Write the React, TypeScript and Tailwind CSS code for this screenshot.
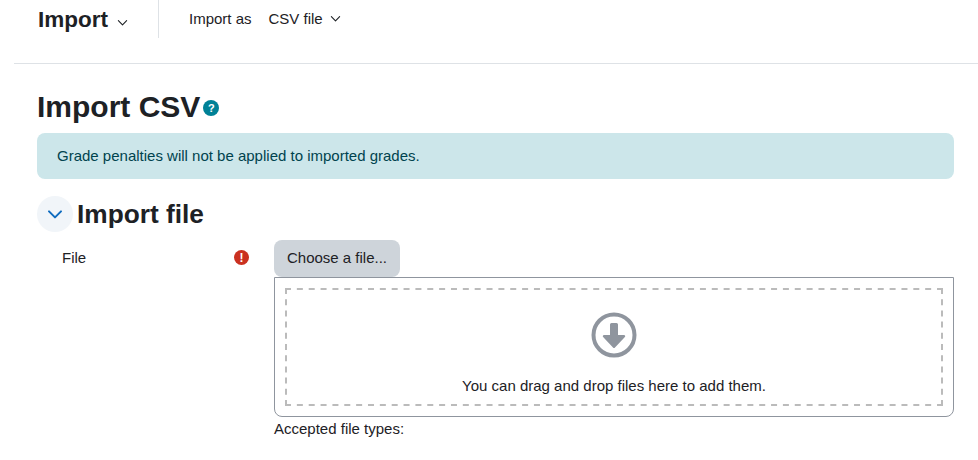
import React from "react";

const Chev = ({ className, color = "#1d2125", w = 1.2 }: { className: string; color?: string; w?: number }) => (
  <svg className={className} viewBox="0 0 12 12" fill="none">
    <path d="M1.5 4l4.500 4.500L10.500 4" stroke={color} strokeWidth={w} strokeLinecap="round" strokeLinejoin="round" />
  </svg>
);

export default function App() {
  return (
    <div className="h-[460px] w-[978px] overflow-hidden bg-white font-['Liberation_Sans',sans-serif] text-[15px] text-[#1d2125]">
      <div className="ml-[14px] flex h-[64px] items-start border-b border-[#dee2e6] pl-[24px]">
        <div className="flex h-[38px] w-[121px] items-start border-r border-[#dee2e6]">
          <span className="text-[22.5px] font-bold leading-[40px]">Import</span>
          <Chev className="ml-[9px] mt-[17px] h-[11px] w-[11px]" />
        </div>
        <span className="ml-[30px] leading-[37px]">Import as</span>
        <span className="ml-[17px] leading-[38px]">CSV file</span>
        <Chev className="ml-[7px] mt-[13px] h-[11px] w-[11px]" />
      </div>
      <div className="pl-[37px]">
        <div className="mt-[25px] flex h-[36px] items-center">
          <h1 className="text-[30px] font-bold leading-[36px]">Import CSV</h1>
          <span className="ml-[3px] mt-[2px] flex h-[16px] w-[16px] items-center justify-center rounded-full bg-[#008196] text-[11px] font-bold text-white">?</span>
        </div>
        <div className="mt-[8px] flex h-[46px] w-[917px] items-center rounded-[8px] bg-[#cce6ea] px-[20px] text-[#00434e]">Grade penalties will not be applied to imported grades.</div>
        <div className="mt-[17px] flex h-[36px] items-center">
          <span className="flex h-[36px] w-[36px] items-center justify-center rounded-full bg-[#f1f5f9]">
            <Chev className="h-[16px] w-[16px]" color="#0f6cbf" w={1.5} />
          </span>
          <h2 className="ml-[4px] text-[26.25px] font-bold leading-[36px]">Import file</h2>
        </div>
        <div className="mt-[8px] flex">
          <div className="flex w-[237px] shrink-0 items-start justify-between pl-[25px] pr-[25px]">
            <span className="leading-[36px]">File</span>
            <span className="mt-[10px] flex h-[15px] w-[15px] items-center justify-center rounded-full bg-[#ca3120] text-[12px] font-bold text-white">!</span>
          </div>
          <div className="w-[680px] shrink-0">
            <div className="flex h-[37px] w-[126px] items-center justify-center rounded-[8px] bg-[#ced4da]">Choose a file...</div>
            <div className="h-[140px] w-[680px] rounded-b-[8px] border border-[#8f959e] p-[10px]">
              <div className="relative flex h-full flex-col items-center pt-[24px]">
                <svg className="absolute left-0 top-0" width="658" height="118" viewBox="0 0 658 118" fill="none" stroke="#bbbbbb" strokeWidth="2">
                  <line x1="0" y1="1" x2="658" y2="1" strokeDasharray="6 5.855" />
                  <line x1="0" y1="117" x2="658" y2="117" strokeDasharray="6 5.855" />
                  <line x1="1" y1="0" x2="1" y2="118" strokeDasharray="6 5.2" />
                  <line x1="657" y1="0" x2="657" y2="118" strokeDasharray="6 5.2" />
                </svg>
                <svg width="46" height="46" viewBox="0 0 46 46">
                  <circle cx="23" cy="23" r="20.500" fill="none" stroke="#8f959e" strokeWidth="4" />
                  <path d="M19 12.500a1.500 1.500 0 0 1 1.500-1.500h5a1.500 1.500 0 0 1 1.500 1.500V23h6a1.200 1.200 0 0 1 .9 2L24 35.500a1.400 1.400 0 0 1-2 0L12.100 25a1.200 1.200 0 0 1 .9-2h6z" fill="#8f959e" />
                </svg>
                <span className="mt-[18px] leading-[20px]">You can drag and drop files here to add them.</span>
              </div>
            </div>
            <div className="leading-[24px]">Accepted file types:</div>
          </div>
        </div>
      </div>
    </div>
  );
}
